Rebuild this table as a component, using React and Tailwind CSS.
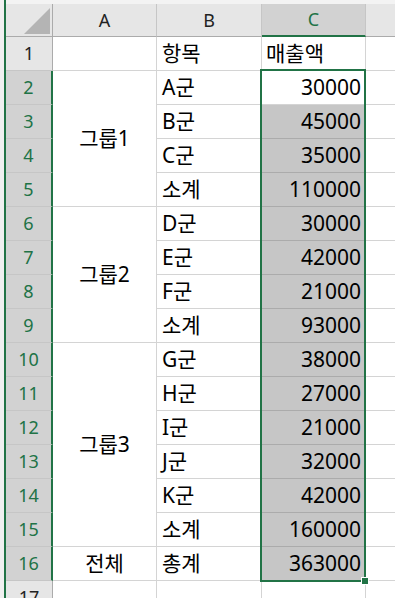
import React from 'react';

const ROW = [
  'row-start-1', 'row-start-2', 'row-start-3', 'row-start-4', 'row-start-5', 'row-start-6',
  'row-start-7', 'row-start-8', 'row-start-9', 'row-start-10', 'row-start-11', 'row-start-12',
  'row-start-13', 'row-start-14', 'row-start-15', 'row-start-16', 'row-start-17', 'row-start-18',
];
const COL = ['col-start-1', 'col-start-2', 'col-start-3', 'col-start-4', 'col-start-5'];
const SPAN = { 1: 'row-span-1', 4: 'row-span-4', 6: 'row-span-6', 15: 'row-span-15' };

// 시트 데이터: [A(병합), B, C]
const rows = [
  { b: 'A군', c: '30000' },
  { b: 'B군', c: '45000' },
  { b: 'C군', c: '35000' },
  { b: '소계', c: '110000' },
  { b: 'D군', c: '30000' },
  { b: 'E군', c: '42000' },
  { b: 'F군', c: '21000' },
  { b: '소계', c: '93000' },
  { b: 'G군', c: '38000' },
  { b: 'H군', c: '27000' },
  { b: 'I군', c: '21000' },
  { b: 'J군', c: '32000' },
  { b: 'K군', c: '42000' },
  { b: '소계', c: '160000' },
  { b: '총계', c: '363000' },
];

const groups = [
  { label: '그룹1', start: 2, span: 4 },
  { label: '그룹2', start: 6, span: 4 },
  { label: '그룹3', start: 10, span: 6 },
  { label: '전체', start: 16, span: 1 },
];

const Cell = ({ r, c, span = 1, className = '', children }) => (
  <div className={`${ROW[r - 1]} ${COL[c - 1]} ${SPAN[span]} ${className}`}>{children}</div>
);

export default function App() {
  const font = "font-['Noto_Sans','Noto_Sans_CJK_KR',sans-serif]";
  return (
    <div className={`flex h-[598px] w-[395px] overflow-hidden bg-white ${font}`}>
      <div className="w-[4px] shrink-0 bg-[#f0f0f0]" />
      <div className="w-[2px] shrink-0 bg-[#217346]" />
      <div className="flex min-w-0 flex-1 flex-col">
        <div className="h-[4px] shrink-0 bg-[#f3f3f3]" />
        <div className="grid grid-cols-[47px_104px_105px_104px_1fr] grid-rows-[33px_repeat(17,34px)]">
          {/* 코너 */}
          <Cell r={1} c={1} className="flex items-end justify-end border-r border-b border-[#ababab] bg-[#e6e6e6] p-[2px]">
            <svg width="26" height="26" viewBox="0 0 26 26">
              <polygon points="26,0 26,26 0,26" fill="#b4b4b4" />
            </svg>
          </Cell>

          {/* 열 머리글 */}
          {['A', 'B'].map((l, i) => (
            <Cell key={l} r={1} c={i + 2} className="flex items-center justify-center border-r border-b border-r-[#c6c6c6] border-b-[#ababab] bg-[#e6e6e6] text-[18px] text-[#222]">
              {l}
            </Cell>
          ))}
          <Cell r={1} c={4} className="flex items-center justify-center border-r border-b-2 border-r-[#c6c6c6] border-b-[#217346] bg-[#d2d2d2] text-[18px] text-[#217346]">
            C
          </Cell>
          <Cell r={1} c={5} className="border-b border-[#ababab] bg-[#e6e6e6]" />

          {/* 행 머리글 */}
          {Array.from({ length: 17 }, (_, i) => {
            const n = i + 1;
            const sel = n >= 2 && n <= 16;
            return (
              <Cell
                key={n}
                r={n + 1}
                c={1}
                className={
                  sel
                    ? 'flex items-center justify-center border-r-2 border-b border-r-[#217346] border-b-[#c6c6c6] bg-[#d2d2d2] text-[18px] text-[#217346]'
                    : 'flex items-center justify-center border-r border-b border-r-[#ababab] border-b-[#c6c6c6] bg-[#e6e6e6] text-[18px] text-[#222]'
                }
              >
                {n}
              </Cell>
            );
          })}

          {/* 1행 */}
          <Cell r={2} c={2} className="border-r border-b border-[#d4d4d4]" />
          <Cell r={2} c={3} className="flex items-center border-r border-b border-[#d4d4d4] pl-[5px] text-[21px] text-black">
            항목
          </Cell>
          <Cell r={2} c={4} className="flex items-center border-r border-b border-[#d4d4d4] pl-[4px] text-[21px] text-black">
            매출액
          </Cell>
          <Cell r={2} c={5} className="border-b border-[#d4d4d4]" />

          {/* A열 병합 */}
          {groups.map((g) => (
            <Cell key={g.label} r={g.start + 1} c={2} span={g.span} className="flex items-center justify-center border-r border-b border-[#d4d4d4] text-[21px] text-black">
              {g.label}
            </Cell>
          ))}

          {/* B, C, D열 */}
          {rows.map((row, i) => {
            const n = i + 2;
            return (
              <React.Fragment key={n}>
                <Cell r={n + 1} c={3} className="flex items-center border-r border-b border-[#d4d4d4] pl-[5px] text-[21px] text-black">
                  {row.b}
                </Cell>
                <Cell
                  r={n + 1}
                  c={4}
                  className={
                    n === 2
                      ? 'flex items-center justify-end border-r border-b border-[#d4d4d4] bg-white pr-[4px] text-[21px] text-black'
                      : 'flex items-center justify-end border-r border-b border-[#ababab] bg-[#c6c6c6] pr-[4px] text-[21px] text-black'
                  }
                >
                  {row.c}
                </Cell>
                <Cell r={n + 1} c={5} className="border-b border-[#d4d4d4]" />
              </React.Fragment>
            );
          })}

          {/* 17행 */}
          <Cell r={18} c={2} className="border-r border-[#d4d4d4]" />
          <Cell r={18} c={3} className="border-r border-[#d4d4d4]" />
          <Cell r={18} c={4} className="border-r border-[#d4d4d4]" />

          {/* 선택 영역 C2:C16 */}
          <Cell r={3} c={4} span={15} className="pointer-events-none relative -mt-[2px] -ml-[2px] -mb-[1px] border-2 border-[#217346]">
            <div className="absolute -right-[5px] -bottom-[5px] h-[8px] w-[8px] border border-white bg-[#217346]" />
          </Cell>
        </div>
      </div>
    </div>
  );
}
